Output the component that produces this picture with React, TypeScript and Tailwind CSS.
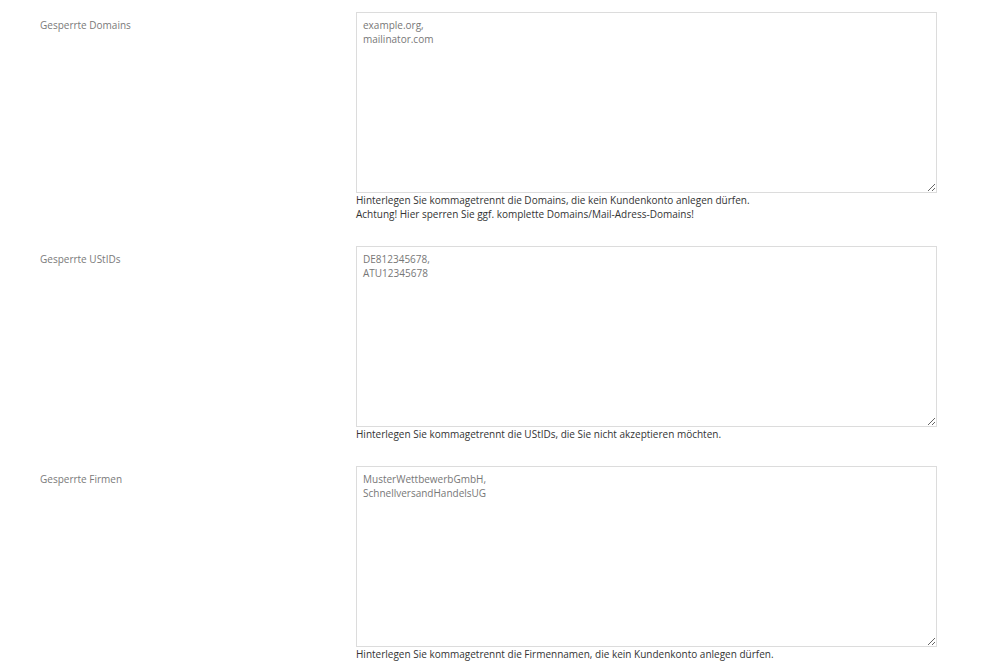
const rows = [
  {
    label: "Gesperrte Domains",
    value: "example.org,\nmailinator.com",
    help: [
      "Hinterlegen Sie kommagetrennt die Domains, die kein Kundenkonto anlegen dürfen.",
      "Achtung! Hier sperren Sie ggf. komplette Domains/Mail-Adress-Domains!",
    ],
  },
  {
    label: "Gesperrte UStIDs",
    value: "DE812345678,\nATU12345678",
    help: ["Hinterlegen Sie kommagetrennt die UStIDs, die Sie nicht akzeptieren möchten."],
  },
  {
    label: "Gesperrte Firmen",
    value: "MusterWettbewerbGmbH,\nSchnellversandHandelsUG",
    help: ["Hinterlegen Sie kommagetrennt die Firmennamen, die kein Kundenkonto anlegen dürfen."],
  },
]

export default function App() {
  return (
    <div className="min-h-screen bg-white pt-[12px] pl-[40px] font-['Open_Sans',sans-serif] text-[10px]">
      {rows.map((row) => (
        <div key={row.label} className="flex mb-[25px]">
          <label className="w-[316px] shrink-0 pt-[6px] leading-[14px] text-[#7a7a7a]">{row.label}</label>
          <div className="w-[581px]">
            <textarea
              defaultValue={row.value}
              className="block w-full h-[181px] border border-[#dcdcdc] px-[6px] py-[5px] leading-[14px] text-[#777777] outline-none resize-y"
            />
            <div className="leading-[14px] text-[#333333]">
              {row.help.map((line) => (
                <div key={line}>{line}</div>
              ))}
            </div>
          </div>
        </div>
      ))}
    </div>
  )
}
